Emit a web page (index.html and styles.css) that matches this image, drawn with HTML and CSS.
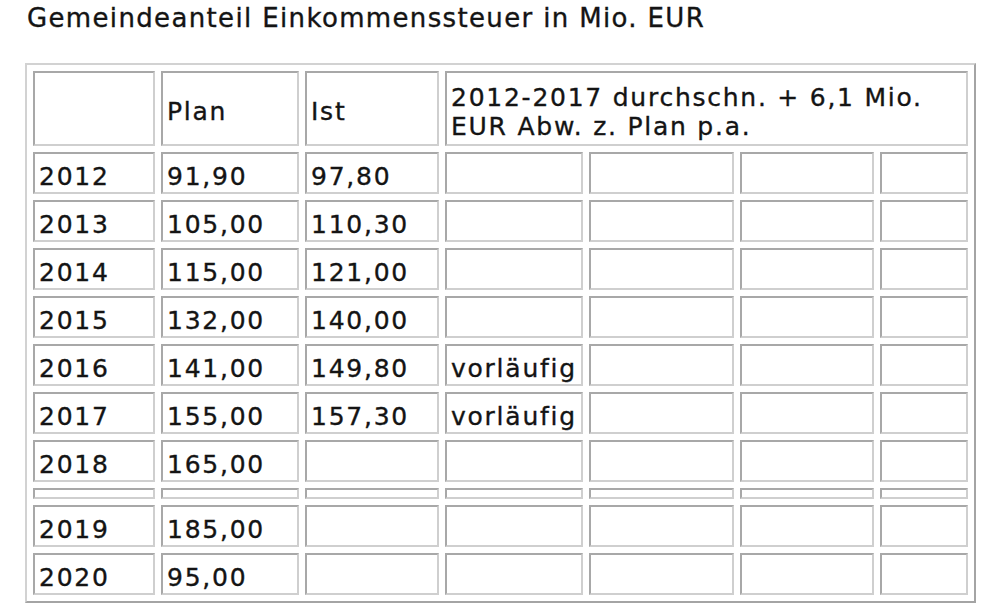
FILE: index.html
```html
<!DOCTYPE html>
<html lang="de">
<head>
<meta charset="utf-8">
<title>Gemeindeanteil Einkommenssteuer</title>
<link rel="stylesheet" href="styles.css">
</head>
<body>
<div class="title">Gemeindeanteil Einkommenssteuer in Mio. EUR</div>
<table class="data">
  <colgroup>
    <col class="c1"><col class="c2"><col class="c3"><col class="c4"><col class="c5"><col class="c6"><col class="c7">
  </colgroup>
  <tr class="head">
    <td></td><td>Plan</td><td>Ist</td><td colspan="4">2012-2017 durchschn. + 6,1 Mio. EUR Abw. z. Plan p.a.</td>
  </tr>
  <tr><td>2012</td><td>91,90</td><td>97,80</td><td></td><td></td><td></td><td></td></tr>
  <tr><td>2013</td><td>105,00</td><td>110,30</td><td></td><td></td><td></td><td></td></tr>
  <tr><td>2014</td><td>115,00</td><td>121,00</td><td></td><td></td><td></td><td></td></tr>
  <tr><td>2015</td><td>132,00</td><td>140,00</td><td></td><td></td><td></td><td></td></tr>
  <tr><td>2016</td><td>141,00</td><td>149,80</td><td>vorläufig</td><td></td><td></td><td></td></tr>
  <tr><td>2017</td><td>155,00</td><td>157,30</td><td>vorläufig</td><td></td><td></td><td></td></tr>
  <tr><td>2018</td><td>165,00</td><td></td><td></td><td></td><td></td><td></td></tr>
  <tr class="gap"><td></td><td></td><td></td><td></td><td></td><td></td><td></td></tr>
  <tr><td>2019</td><td>185,00</td><td></td><td></td><td></td><td></td><td></td></tr>
  <tr><td>2020</td><td>95,00</td><td></td><td></td><td></td><td></td><td></td></tr>
</table>
</body>
</html>
```
FILE: styles.css
```css
html, body {
  margin: 0;
  padding: 0;
  background: #ffffff;
}
body {
  font-family: "DejaVu Sans", Verdana, sans-serif;
  color: #141414;
  -webkit-text-stroke: 0.35px #141414;
}
.title {
  margin: 3px 0 0 27px;
  font-size: 26px;
  letter-spacing: 1.35px;
  line-height: 30px;
}
.data {
  margin: 30px 0 0 25px;
  table-layout: fixed;
  border-collapse: separate;
  border-spacing: 6px;
  border-style: solid;
  border-width: 2px;
  border-color: #d2d2d2 #a4a4a4 #a4a4a4 #d2d2d2;
  font-size: 25px;
  letter-spacing: 1.75px;
  line-height: 29px;
}
.c1 { width: 122px; }
.c2 { width: 138px; }
.c3 { width: 134px; }
.c4 { width: 138px; }
.c5 { width: 145px; }
.c6 { width: 134px; }
.c7 { width: 88px; }
.data td {
  box-sizing: border-box;
  height: 42px;
  padding: 6px 4px 0 4px;
  vertical-align: middle;
  border-style: solid;
  border-width: 2px;
  border-color: #a8a8a8 #cfcfcf #cfcfcf #a8a8a8;
  white-space: normal;
}
.data .head td {
  height: 75px;
}
.data .gap td {
  height: 11px;
  padding: 0;
}
```
